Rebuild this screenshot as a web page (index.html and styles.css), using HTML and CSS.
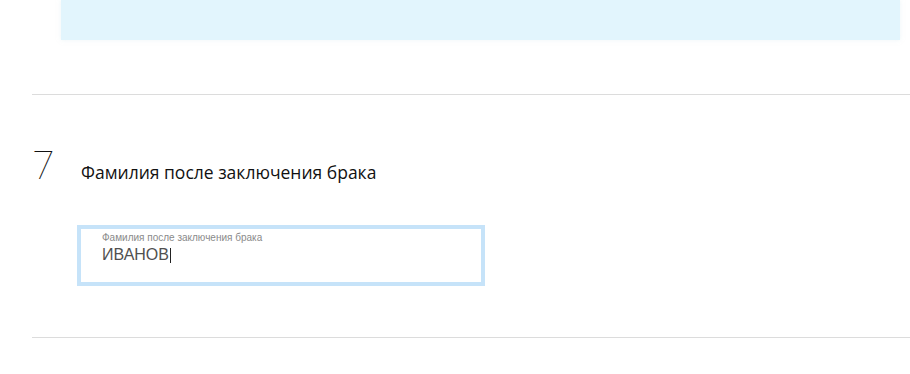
FILE: index.html
```html
<!DOCTYPE html>
<html lang="ru">
<head>
    <meta charset="UTF-8">
    <title>Фамилия после заключения брака</title>
    <link rel="stylesheet" href="styles.css">
</head>
<body>
<div class="notice"></div>

<div class="step">
    <div class="step-head">
        <span class="step-num">7</span>
        <h3 class="step-title">Фамилия после заключения брака</h3>
    </div>
    <div class="field">
        <label class="field-label">Фамилия после заключения брака</label>
        <div class="field-value">ИВАНОВ<span class="caret"></span></div>
    </div>
</div>
</body>
</html>
```
FILE: styles.css
```css
*{
    margin: 0;
    padding: 0;
    box-sizing: border-box;
}
body{
    background-color: #fff;
    font-family: "Liberation Sans", Arial, sans-serif;
}
.notice{
    height: 40px;
    margin: 0 10px 0 61px;
    background-color: #e2f5fd;
    box-shadow: 0 0 4px rgba(220, 235, 240, 0.5);
}
.step{
    margin: 54px 0 0 32px;
    padding: 51px 0 51px 0;
    border-top: 1px solid #dcdcdc;
    border-bottom: 1px solid #dcdcdc;
}
.step-head{
    display: flex;
    align-items: baseline;
}
.step-num{
    width: 49px;
    padding-left: 1px;
    font-family: Roboto, sans-serif;
    font-weight: 100;
    font-size: 39px;
    line-height: 40px;
    color: #111;
}
.step-title{
    font-family: "Open Sans", sans-serif;
    font-weight: normal;
    font-size: 17.5px;
    color: #111;
}
.field{
    width: 408px;
    height: 61px;
    margin: 39px 0 0 45px;
    padding: 3px 0 0 21px;
    border: 4px solid #c6e3f9;
    background-color: #fff;
}
.field-label{
    display: block;
    font-size: 10px;
    line-height: 11px;
    color: #8a8a8a;
    margin-bottom: 3px;
}
.field-value{
    font-size: 16px;
    line-height: 18px;
    color: #505050;
}
.caret{
    display: inline-block;
    width: 1px;
    height: 15px;
    margin-left: 1px;
    vertical-align: -3px;
    background-color: #222;
}
```
